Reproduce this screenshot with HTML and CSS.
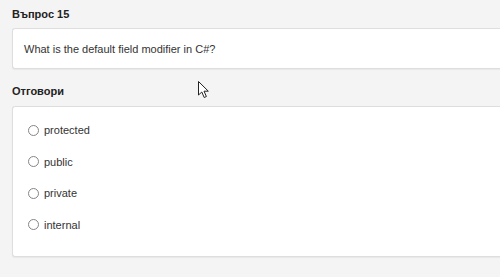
FILE: index.html
```html
<!DOCTYPE html>
<html lang="bg">
<head>
<meta charset="utf-8">
<title>Въпрос 15</title>
<link rel="stylesheet" href="styles.css">
</head>
<body>
<div class="page">
  <h2 class="heading first">Въпрос 15</h2>
  <div class="card question">What is the default field modifier in C#?</div>
  <h2 class="heading">Отговори</h2>
  <div class="card answers">
    <label class="option"><span class="radio"></span><span>protected</span></label>
    <label class="option"><span class="radio"></span><span>public</span></label>
    <label class="option"><span class="radio"></span><span>private</span></label>
    <label class="option"><span class="radio"></span><span>internal</span></label>
  </div>
</div>
<svg class="cursor" width="12" height="18" viewBox="0 0 12 18">
  <path d="M0.5 0.5 L0.5 14 L3.8 11 L6.2 16.5 L8.4 15.5 L6 10.2 L10.3 10.2 Z" fill="#fff" stroke="#222" stroke-width="1" stroke-linejoin="miter"/>
</svg>
</body>
</html>
```
FILE: styles.css
```css
html, body {
  margin: 0;
  padding: 0;
  background: #f4f4f4;
  overflow: hidden;
}
body {
  width: 500px;
  height: 277px;
  position: relative;
  font-family: "Liberation Sans", Arial, sans-serif;
  font-size: 11px;
  color: #333;
}
.page {
  padding-left: 12px;
}
.heading {
  margin: 15px 0 8px 0;
  font-size: 11px;
  line-height: 14px;
  font-weight: bold;
  color: #222;
}
.heading.first {
  margin-top: 7px;
  margin-bottom: 7px;
}
.card {
  background: #fff;
  border: 1px solid #dedede;
  border-right: none;
  border-radius: 3px 0 0 3px;
  box-shadow: 0 1px 1px rgba(0,0,0,0.05);
  box-sizing: border-box;
}
.question {
  height: 41px;
  padding: 0 11px;
  display: flex;
  align-items: center;
  line-height: 14px;
}
.answers {
  height: 151px;
  padding: 15px 15px 0 15px;
  display: flex;
  flex-direction: column;
  gap: 15.5px;
}
.option {
  display: flex;
  align-items: center;
  gap: 5px;
  height: 16px;
  line-height: 14px;
}
.radio {
  width: 11px;
  height: 11px;
  border: 1px solid #858585;
  border-radius: 50%;
  background: #fff;
  box-sizing: border-box;
  flex: none;
}
.cursor {
  position: absolute;
  left: 198px;
  top: 81px;
}
```
